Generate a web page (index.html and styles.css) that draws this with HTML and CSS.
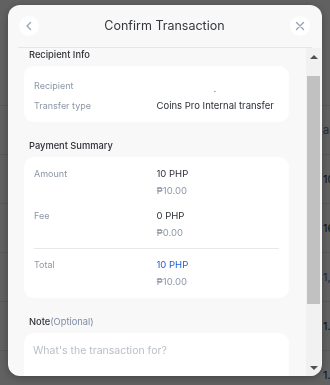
FILE: index.html
```html
<!DOCTYPE html>
<html lang="en">
<head>
    <meta charset="UTF-8">
    <meta name="viewport" content="width=device-width, initial-scale=1.0">
    <title>Confirm Transaction</title>
    <link rel="stylesheet" href="styles.css">
</head>
<body>
    <!-- Page behind the dialog -->
    <div class="page">
        <div class="page-row"><span class="page-val blue">alue</span></div>
        <div class="page-row"><span class="page-val">10.</span></div>
        <div class="page-row"><span class="page-val">16,</span></div>
        <div class="page-row"><span class="page-val blue">1,5</span></div>
        <div class="page-row"><span class="page-val">1.2</span></div>
        <div class="page-row"><span class="page-val">1.7</span></div>
    </div>

    <!-- Confirm dialog -->
    <div class="overlay">
        <div class="modal">
            <div class="modal-header">
                <button class="circle-btn" aria-label="Back">
                    <svg width="10" height="10" viewBox="0 0 10 10"><path d="M6.5 1.5 L3 5 L6.5 8.5" fill="none" stroke="#9aa3b5" stroke-width="1.4" stroke-linecap="round" stroke-linejoin="round"/></svg>
                </button>
                <h1 class="modal-title">Confirm Transaction</h1>
                <button class="circle-btn" aria-label="Close">
                    <svg width="10" height="10" viewBox="0 0 10 10"><path d="M1.5 1.5 L8.5 8.5 M8.5 1.5 L1.5 8.5" fill="none" stroke="#9aa3b5" stroke-width="1.4" stroke-linecap="round"/></svg>
                </button>
            </div>

            <div class="modal-main">
                <div class="modal-body">
                    <section class="section">
                        <h2 class="section-title">Recipient Info</h2>
                        <div class="card info-card">
                            <div class="row">
                                <span class="label">Recipient</span>
                                <span class="value masked">.</span>
                            </div>
                            <div class="row">
                                <span class="label">Transfer type</span>
                                <span class="value">Coins Pro Internal transfer</span>
                            </div>
                        </div>
                    </section>

                    <section class="section">
                        <h2 class="section-title">Payment Summary</h2>
                        <div class="card summary-card">
                            <div class="sum-row">
                                <span class="label">Amount</span>
                                <div>
                                    <div class="value">10 PHP</div>
                                    <div class="sub">₱10.00</div>
                                </div>
                            </div>
                            <div class="sum-row">
                                <span class="label">Fee</span>
                                <div>
                                    <div class="value">0 PHP</div>
                                    <div class="sub">₱0.00</div>
                                </div>
                            </div>
                            <hr class="divider">
                            <div class="sum-row">
                                <span class="label">Total</span>
                                <div>
                                    <div class="value total">10 PHP</div>
                                    <div class="sub">₱10.00</div>
                                </div>
                            </div>
                        </div>
                    </section>

                    <section class="section">
                        <h2 class="section-title">Note<span class="optional">(Optional)</span></h2>
                        <div class="card note-card">
                            <textarea class="note-input" placeholder="What's the transaction for?"></textarea>
                        </div>
                    </section>
                </div>

                <!-- scrollbar -->
                <div class="scrollbar">
                    <span class="arrow up"></span>
                    <div class="track"><div class="thumb"></div></div>
                    <span class="arrow down"></span>
                </div>
            </div>
        </div>
    </div>
</body>
</html>
```

FILE: styles.css
```css
* {
    box-sizing: border-box;
}

body {
    margin: 0;
    background: #ffffff;
    font-family: "Inter", "Noto Sans", sans-serif;
    color: #2b2f36;
}

/* page behind */
.page {
    padding-top: 105px;
}

.page-row {
    height: 49px;
    border-top: 1px solid #e9e9e9;
    display: flex;
    align-items: center;
    justify-content: flex-end;
}

.page-val {
    width: 20px;
    font-size: 11px;
    color: #333;
    margin-right: -13px;
}

.page-val.blue {
    color: #5a6f96;
}

/* dialog */
.overlay {
    position: fixed;
    inset: 0;
    background: rgba(0, 0, 0, 0.62);
    padding: 5px 8px 9px 8px;
}

.modal {
    height: 371px;
    background: #f8f8f8;
    border-radius: 12px;
    overflow: hidden;
    display: flex;
    flex-direction: column;
    box-shadow: 0 2px 8px rgba(0, 0, 0, 0.3);
}

.modal-header {
    height: 43px;
    flex-shrink: 0;
    display: flex;
    align-items: center;
    justify-content: space-between;
    margin: 0 10px;
    padding: 0 2px 1px 1px;
    border-bottom: 1px solid #e4e6ea;
}

.circle-btn {
    width: 20px;
    height: 20px;
    border-radius: 50%;
    border: none;
    background: #ffffff;
    padding: 0;
    display: flex;
    align-items: center;
    justify-content: center;
}

.modal-title {
    margin: 0;
    font-size: 12.5px;
    font-weight: 400;
    color: #33363b;
}

.modal-main {
    flex: 1;
    display: flex;
    min-height: 0;
}

.modal-body {
    flex: 1;
    overflow: hidden;
    padding: 1px 17px 0 16px;
}

.section {
    margin-bottom: 18px;
}

.section-title {
    margin: 0 0 6px 5px;
    font-size: 9.3px;
    line-height: 11px;
    font-weight: 500;
    color: #2f3237;
}

.optional {
    color: #7d8aa3;
    font-weight: 400;
}

.card {
    background: #ffffff;
    border-radius: 10px;
}

.info-card {
    padding: 8px 10px 7px;
    display: flex;
    flex-direction: column;
    gap: 1px;
}

.row {
    display: grid;
    grid-template-columns: 1fr 1fr;
    height: 20px;
    align-items: center;
}

.label {
    font-size: 9px;
    color: #8c96a6;
}

.value {
    font-size: 9.5px;
    line-height: 17px;
    color: #2b2f36;
    white-space: nowrap;
}

.masked {
    padding-left: 57px;
    padding-top: 6px;
    color: #777;
}

.summary-card {
    padding: 8px 10px;
}

.sum-row {
    display: grid;
    grid-template-columns: 1fr 1fr;
    align-items: start;
}

.sum-row + .sum-row {
    margin-top: 8px;
}

.sum-row .label {
    line-height: 17px;
}

.sub {
    font-size: 9.5px;
    line-height: 17px;
    color: #8c96a6;
}

.total {
    color: #1d5fd6;
}

.divider {
    border: none;
    border-top: 1px solid #e6e8eb;
    margin: 7px 0;
}

.note-card {
    height: 70px;
    padding: 11px 9px;
}

.note-input {
    width: 100%;
    height: 100%;
    border: none;
    resize: none;
    outline: none;
    padding: 0;
    font-family: "Inter", "Noto Sans", sans-serif;
    font-size: 10.5px;
    color: #2b2f36;
    background: transparent;
}

.note-input::placeholder {
    color: #b9bec6;
}

/* fake classic scrollbar */
.scrollbar {
    width: 15px;
    margin-right: 1px;
    background: #f1f1f1;
    display: flex;
    flex-direction: column;
    align-items: center;
}

.arrow {
    height: 17px;
    width: 15px;
    flex-shrink: 0;
    display: flex;
    align-items: center;
    justify-content: center;
}

.arrow::before {
    content: "";
    border-left: 4px solid transparent;
    border-right: 4px solid transparent;
}

.arrow.up::before {
    border-bottom: 4px solid #505050;
}

.arrow.down::before {
    border-top: 4px solid #505050;
}

.track {
    flex: 1;
    width: 100%;
    padding: 11px 1px 0;
}

.thumb {
    height: 228px;
    background: #c1c1c1;
}
```
